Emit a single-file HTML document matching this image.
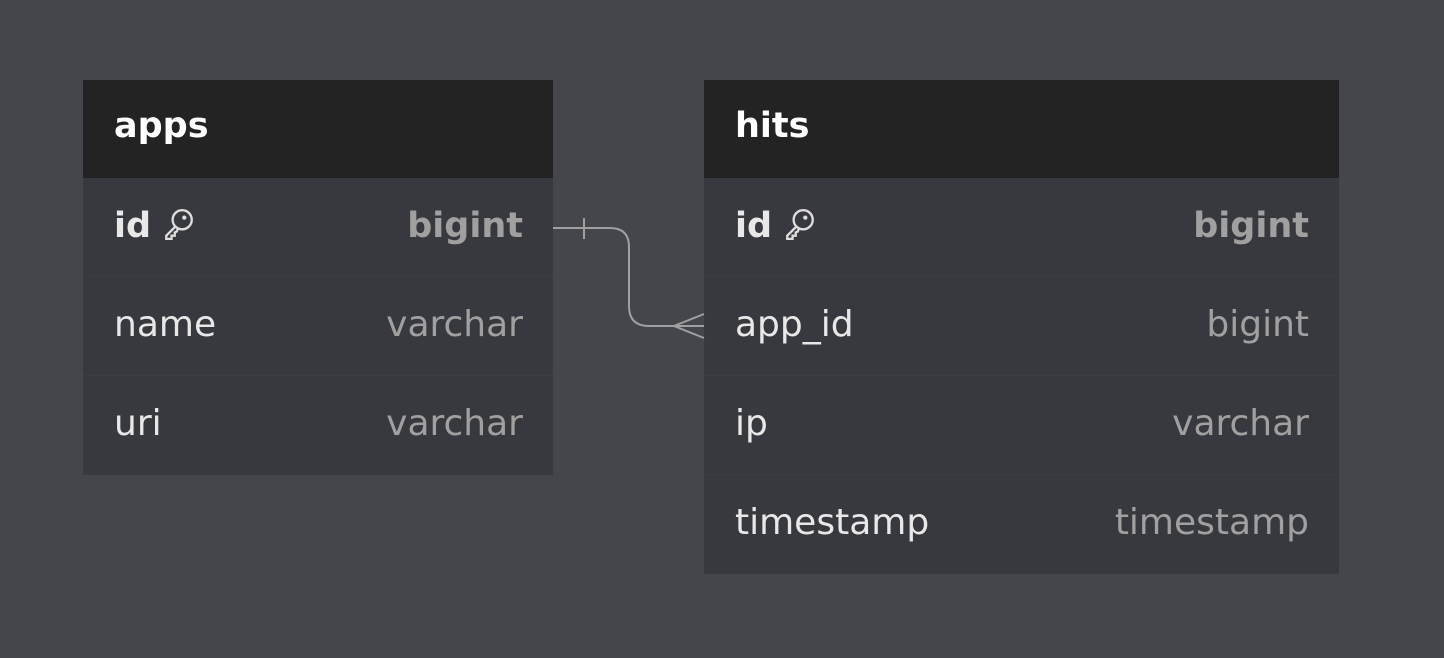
<!DOCTYPE html>
<html><head><style>
body{margin:0;width:1444px;height:658px;background:#45464c;position:relative;overflow:hidden;font-family:"DejaVu Sans","Liberation Sans",sans-serif}
.t{position:absolute;background:#38393f}
.h{height:98px;background:#232323;color:#fff;font-weight:bold;font-size:35px;line-height:92px;padding-left:31px}
.r{height:98px;border-top:1px solid #3d3e44;position:relative;font-size:36px;line-height:96px;color:#e8e8e8}
.r .n{position:absolute;left:31px}
.r .y{position:absolute;right:30px;color:#a0a0a0}
.b{font-weight:bold;font-size:35px}
</style></head><body>
<div class="t" style="left:83px;top:80px;width:470px;height:395px">
<div class="h">apps</div>
<div class="r" style="border-top:none"><span class="n b">id <svg width="32" height="34" viewBox="0 0 30 32" style="vertical-align:-4px"><circle cx="18" cy="12" r="9" fill="none" stroke="#ddd" stroke-width="2.2"/><circle cx="20" cy="10" r="2" fill="#ddd"/><path d="M12 18 L3 27 L3 30 L8 30 L8 27 L11 27 L11 24 L13 23 L14 20" fill="none" stroke="#ddd" stroke-width="2.2"/></svg></span><span class="y b">bigint</span></div>
<div class="r"><span class="n">name</span><span class="y">varchar</span></div>
<div class="r"><span class="n">uri</span><span class="y">varchar</span></div>
</div>
<div class="t" style="left:704px;top:80px;width:635px;height:494px">
<div class="h">hits</div>
<div class="r" style="border-top:none"><span class="n b">id <svg width="32" height="34" viewBox="0 0 30 32" style="vertical-align:-4px"><circle cx="18" cy="12" r="9" fill="none" stroke="#ddd" stroke-width="2.2"/><circle cx="20" cy="10" r="2" fill="#ddd"/><path d="M12 18 L3 27 L3 30 L8 30 L8 27 L11 27 L11 24 L13 23 L14 20" fill="none" stroke="#ddd" stroke-width="2.2"/></svg></span><span class="y b">bigint</span></div>
<div class="r"><span class="n">app_id</span><span class="y">bigint</span></div>
<div class="r"><span class="n">ip</span><span class="y">varchar</span></div>
<div class="r"><span class="n">timestamp</span><span class="y">timestamp</span></div>
</div>
<svg style="position:absolute;left:0;top:0" width="1444" height="658">
<path d="M553 228 H610 Q629 228 629 247 V306 Q629 326 649 326 H704" fill="none" stroke="#a0a0a0" stroke-width="2"/>
<path d="M584 218 V239" stroke="#a0a0a0" stroke-width="2"/>
<path d="M704 314 L674 326 L704 338" fill="none" stroke="#a0a0a0" stroke-width="2"/>
</svg>
</body></html>
